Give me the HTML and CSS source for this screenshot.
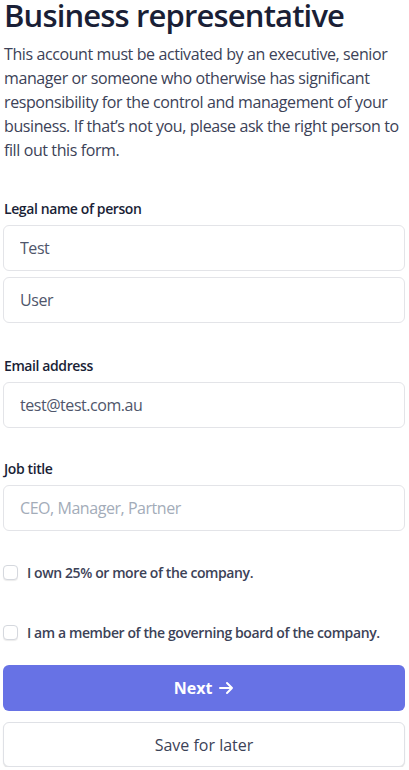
FILE: index.html
```html
<!DOCTYPE html>
<html lang="en">
<head>
<meta charset="utf-8">
<title>Business representative</title>
<link rel="stylesheet" href="styles.css">
</head>
<body>
<main class="page">
  <h1 class="title">Business representative</h1>
  <p class="intro">This account must be activated by an executive, senior manager or someone who otherwise has significant responsibility for the control and management of your business. If that’s not you, please ask the right person to fill out this form.</p>

  <div class="group">
    <label class="label">Legal name of person</label>
    <div class="stack">
      <input class="field" type="text" value="Test">
      <input class="field" type="text" value="User">
    </div>
  </div>

  <div class="group">
    <label class="label">Email address</label>
    <input class="field" type="text" value="test@test.com.au">
  </div>

  <div class="group job">
    <label class="label">Job title</label>
    <input class="field" type="text" placeholder="CEO, Manager, Partner">
  </div>

  <label class="check first"><span class="box"></span><span>I own 25% or more of the company.</span></label>
  <label class="check second"><span class="box"></span><span>I am a member of the governing board of the company.</span></label>

  <div class="actions">
    <button class="btn primary" type="button">Next
      <svg class="arrow" width="16" height="16" viewBox="0 0 16 16" fill="none" stroke="currentColor" stroke-width="2" stroke-linecap="round" stroke-linejoin="round"><path d="M2 8h12M9 3l5 5-5 5"/></svg>
    </button>
    <button class="btn secondary" type="button">Save for later</button>
  </div>
</main>
</body>
</html>
```

FILE: styles.css
```css
* { box-sizing: border-box; }
html, body { margin: 0; padding: 0; background: #ffffff; }
body { font-family: "Open Sans", "Liberation Sans", sans-serif; color: #3c4257; }
.page { padding: 2px 4px 0 3px; }
.title {
  margin: 0 0 0 1px;
  font-size: 31px;
  line-height: 34px;
  font-weight: 600;
  color: #1a1f36;
  letter-spacing: -0.85px;
  margin-top: -4px;
}
.intro {
  margin: 10px 0 0 1px;
  font-size: 16px;
  line-height: 24px;
  color: #3c4257;
  letter-spacing: -0.4px;
}
.group { margin-top: 37px; display: flex; flex-direction: column; }
.group + .group { margin-top: 33px; }
.group.job { margin-top: 31px; }
.label {
  display: block;
  font-size: 14px;
  line-height: 20px;
  font-weight: 600;
  color: #1a1f36;
  margin: 0 0 6px 1px;
  letter-spacing: -0.4px;
}
.stack { display: flex; flex-direction: column; gap: 6px; }
.field {
  display: block;
  width: 100%;
  height: 46px;
  border: 1px solid #e3e4e8;
  border-radius: 6px;
  padding: 0 16px;
  font-family: inherit;
  font-size: 16px;
  color: #4f566b;
  background: #fff;
  outline: none;
  letter-spacing: -0.45px;
}
.field::placeholder { color: #a3acb9; }
.check {
  display: flex;
  align-items: center;
  gap: 9px;
  height: 20px;
  font-size: 14px;
  font-weight: 600;
  color: #3c4257;
  letter-spacing: -0.4px;
}
.check.first { margin-top: 31px; }
.check.second { margin-top: 40px; }
.box {
  width: 15px;
  height: 15px;
  border: 1px solid #d5d8de;
  border-radius: 4px;
  background: #fff;
  box-shadow: 0 1px 1px rgba(0,0,0,0.08);
  flex: none;
}
.actions { margin-top: 23px; display: flex; flex-direction: column; gap: 11px; }
.btn {
  width: 100%;
  height: 46px;
  border-radius: 6px;
  font-family: inherit;
  font-size: 16px;
  display: flex;
  align-items: center;
  justify-content: center;
  gap: 6px;
  cursor: pointer;
}
.primary {
  background: #6772e5;
  color: #fff;
  border: none;
  font-weight: 700;
}
.secondary {
  height: 45px;
  background: #fff;
  color: #3c4257;
  border: 1px solid #dfe1e6;
  box-shadow: 0 1px 1px rgba(0,0,0,0.12);
  font-weight: 500;
}
.arrow { display: block; }
```
